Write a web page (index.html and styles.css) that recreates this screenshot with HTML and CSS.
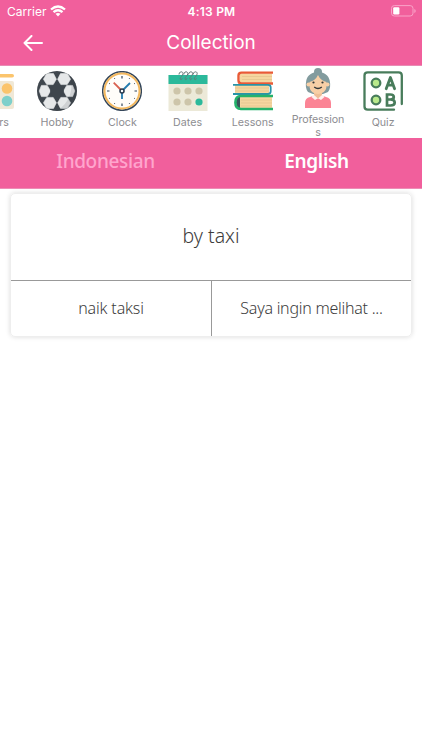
FILE: index.html
```html
<!DOCTYPE html>
<html lang="en">
<head>
<meta charset="utf-8">
<title>Collection</title>
<link rel="stylesheet" href="styles.css">
</head>
<body>
<header class="top">
  <div class="status">
    <div class="carrier"><span>Carrier</span>
      <svg width="16" height="12" viewBox="0 0 16 12" fill="none" stroke="#fff" stroke-width="2.3"><path d="M1 4.5Q8-1.6 15 4.5M3.5 7.2Q8 3.2 12.5 7.2"/><path d="M5.5 8.8Q8 7 10.5 8.8L8 11.4Z" fill="#fff" stroke="none"/></svg>
    </div>
    <span class="time">4:13 PM</span>
    <svg class="battery" width="25" height="12" viewBox="0 0 25 12"><rect x=".5" y=".6" width="21.5" height="10.4" rx="2.8" fill="none" stroke="#f9a3c8"/><rect x="2.2" y="2.2" width="6.2" height="7.2" rx="1.2" fill="#fff"/><path d="M23.3 4v4q1.4-.7 1.4-2t-1.4-2" fill="#f9a3c8"/></svg>
  </div>
  <div class="nav">
    <svg class="back" width="20" height="16" viewBox="0 0 20 16" fill="none" stroke="#fff" stroke-width="2" stroke-linecap="round" stroke-linejoin="round"><path d="M19 8H1.5M8.5 1L1.5 8l7 7"/></svg>
    <h1>Collection</h1>
  </div>
</header>

<nav class="strip">
  <div class="item first">
    <svg viewBox="0 0 40 40"><rect x="1" y="3" width="39" height="3.6" rx="1.8" fill="#fbc46c"/><rect x="1" y="10" width="39" height="28" rx="2" fill="#f0e8d6"/><circle cx="33" cy="17.5" r="5.3" fill="#fbc46c"/><circle cx="33" cy="30" r="5.3" fill="#7fd0cb"/></svg>
    <span>Colors</span>
  </div>
  <div class="item">
    <svg viewBox="0 0 40 40">
      <defs><clipPath id="ball"><circle cx="20" cy="20" r="20"/></clipPath></defs>
      <g clip-path="url(#ball)"><rect width="40" height="40" fill="#3f464d"/>
      <g fill="#e6e8e9" stroke="#e6e8e9" stroke-width=".6" stroke-linejoin="round">
        <path d="M9.7 2.6h6.8l2.9 5.6-3.2 5.4H9.8L6.4 8.2Z"/>
        <path d="M30.3 2.6h-6.8l-2.9 5.6 3.2 5.4h6.4l3.4-5.4Z"/>
        <path d="M4.4 14.4h5.9l3.2 5.6-3.2 5.6H4.4L2.2 20Z"/>
        <path d="M35.6 14.4h-5.9L26.5 20l3.2 5.6h5.9L37.8 20Z"/>
        <path d="M9.7 37.4h6.8l2.9-5.6-3.2-5.4H9.8l-3.4 5.4Z"/>
        <path d="M30.3 37.4h-6.8l-2.9-5.6 3.2-5.4h6.4l3.4 5.4Z"/>
      </g>
      <path d="M16.5 14h7l3.6 6-3.6 6h-7l-3.6-6Z" fill="#3f464d"/>
      <path d="M33 4Q39 27 20 40H40V4Z" fill="#26303a" opacity=".12"/></g>
    </svg>
    <span>Hobby</span>
  </div>
  <div class="item">
    <svg viewBox="0 0 40 40"><circle cx="20" cy="20" r="19.3" fill="#fff" stroke="#34465a" stroke-width="1.5"/><circle cx="20" cy="20" r="17.5" fill="#fffdf9" stroke="#f3b85e" stroke-width="2"/><path d="M20 5v2.5M20 32.5V35M5 20h2.5M32.5 20H35" stroke="#34465a" stroke-width="1.2"/><path d="M12.4 7.2l.5.8M7.2 12.4l.8.5M27.1 32l.5.8M32 27.1l.8.5M27.6 7.2l-.5.8M32.8 12.4l-.8.5M12.9 32l-.5.8M8 27.1l-.8.5" stroke="#34465a" stroke-width="1"/><path d="m20 20-8.3-8.3" stroke="#d9614f" stroke-width="1.8"/><path d="m20 20 8-8M20 20v8" stroke="#267cae" stroke-width="1.8"/><circle cx="20" cy="20" r="2" fill="#fff" stroke="#29394b" stroke-width="1.5"/></svg>
    <span>Clock</span>
  </div>
  <div class="item">
    <svg viewBox="0 0 40 40"><path d="M.5 4h39v36H.5z" fill="#ece9d8"/><path d="M.5 4h39v9H.5z" fill="#2bb99b"/><g fill="#cdc5aa"><circle cx="9" cy="20" r="3.6"/><circle cx="20" cy="20" r="3.6"/><circle cx="31" cy="20" r="3.6"/><circle cx="9" cy="31" r="3.6"/><circle cx="20" cy="31" r="3.6"/></g><circle cx="31" cy="31" r="3.6" fill="#2bb99b"/><g fill="none" stroke="#687779" stroke-width="1"><path id="ring" d="M11 3.5C11 .2 15 0 15 2.5S12 6 12.2 7.7s2 .8 2-.5"/><use href="#ring" x="4.8"/><use href="#ring" x="9.6"/><use href="#ring" x="14.2"/></g></svg>
    <span>Dates</span>
  </div>
  <div class="item">
    <svg viewBox="0 0 40 40"><path d="M7 2.5h32v9H7z" fill="#f5d6a0"/><path d="M9 5.5h30M9 8.5h30" stroke="#e3c28d" stroke-width=".7"/><path d="M40 1.6H8.5Q5.5 1.6 5.5 4.5v5q0 3 3 3H40" fill="none" stroke="#e95b36" stroke-width="2.4"/><path d="M2 14h34v9H2z" fill="#f5d6a0"/><path d="M2 17h34M2 20h34" stroke="#e3c28d" stroke-width=".7"/><path d="M0 13.8h35q2.7 0 2.7 2.5v4q0 2.7-2.7 2.7H0" fill="none" stroke="#2994a8" stroke-width="1.8"/><path d="M7 26h32v11H7z" fill="#f5d6a0"/><path d="M8 29h31M8 32h31M8 35h31" stroke="#e3c28d" stroke-width=".7"/><path d="M7 25Q3 26 3 31.3T7 38Z" fill="#3b555a"/><path d="M40 25H8Q2.4 25 2.4 31.5T8 38h32" fill="none" stroke="#25b26b" stroke-width="2.6"/></svg>
    <span>Lessons</span>
  </div>
  <div class="item two-line">
    <svg viewBox="0 0 40 40"><circle cx="20" cy="4" r="4" fill="#829b9e"/><path d="M10 24Q6.8 20 8.2 13C10 1 30 1 31.8 13q1.4 7-1.8 11l-5 2H15Z" fill="#829b9e"/><path d="M16 21h8v7l-4 4-4-4Z" fill="#eebe96"/><path d="M11.5 14Q17.5 12.5 20 7q2.5 5.5 8.5 7v4c0 10.5-17 10.5-17 0Z" fill="#f8cfa6"/><circle cx="10.5" cy="16.5" r="2" fill="#f8cfa6"/><circle cx="29.5" cy="16.5" r="2" fill="#f8cfa6"/><circle cx="15.5" cy="14.5" r="1.1" fill="#34383a"/><circle cx="24.5" cy="14.5" r="1.1" fill="#34383a"/><path d="M16.2 19Q20 22 23.8 19" fill="none" stroke="#34383a" stroke-width="1.4"/><path d="M7 40v-5q0-5 5-6l4-1.5 4 3.5 4-3.5 4 1.5q5 1 5 6v5Z" fill="#fb8495"/><path d="m15.5 26.5 4.5 4 4.5-4 2 2.5-3.5 3-3-1.7-3 1.7-3.5-3Z" fill="#fff0ee"/></svg>
    <span>Professions</span>
  </div>
  <div class="item">
    <svg viewBox="0 0 40 40"><g fill="none" stroke="#487c5b" stroke-width="2.3" stroke-linecap="round"><path d="M38.8 33V4.5q0-3.2-3.2-3.2H4.7Q1.5 1.3 1.5 4.5v31q0 3.2 3.2 3.2H31"/><g fill="#b9e98b"><circle cx="13" cy="12" r="4.3"/><circle cx="13" cy="29" r="4.3"/></g><path d="M23.2 17.8 27.4 6.5 31.6 17.8M24.8 14.2h5.2" stroke-width="2.8" stroke-linejoin="round"/><path d="M24 23.5V34.5h3.5q4.2 0 4.2-3t-4.2-3H24h3.2q3.6 0 3.6-2.5t-3.6-2.5Z" stroke-width="2.7"/></g></svg>
    <span>Quiz</span>
  </div>
</nav>

<div class="tabs">
  <button class="tab muted">Indonesian</button>
  <button class="tab">English</button>
</div>

<main>
  <section class="card">
    <div class="word">by taxi</div>
    <div class="answers">
      <div class="answer">naik taksi</div>
      <div class="answer long">Saya ingin melihat ...</div>
    </div>
  </section>
</main>
</body>
</html>
```

FILE: styles.css
```css
* { box-sizing: border-box; }
body { margin: 0; height: 750px; background: #fff; overflow: hidden; font-family: "Noto Sans", sans-serif; }
svg { display: block; }

.top { height: 66px; background: #f15f9c; color: #fff; font-family: Inter, sans-serif; border-bottom: 1px solid #e88bb4; }
.status { display: grid; grid-template-columns: 1fr auto 1fr; align-items: center; height: 22px; padding: 0 6px 0 7px; font-size: 12px; }
.carrier { display: flex; align-items: center; gap: 4px; letter-spacing: .02px; }
.time { font-weight: 600; letter-spacing: .2px; }
.battery { justify-self: end; margin-top: -1px; }
.nav { display: grid; grid-template-columns: 60px 1fr 60px; align-items: center; height: 42px; }
.back { margin-left: 23px; }
h1 { margin: 0; text-align: center; font-size: 19px; font-weight: 400; line-height: 24px; letter-spacing: -.05px; }

.strip { display: flex; height: 72px; margin-left: -40.6px; width: 464px; }
.item { flex: 0 0 65.2px; display: flex; flex-direction: column; align-items: center; padding: 5px 5px 0; }
.item svg { width: 40px; height: 40px; flex: none; }
.item span { width: 100%; margin-top: 5px; text-align: center; font: 10.7px/13px Inter, sans-serif; letter-spacing: 0; color: #8d8d91; overflow-wrap: anywhere; }
.item.two-line { padding-top: 2px; }
.item.two-line span { width: 55px; letter-spacing: -.1px; }
.item.first { padding-left: 7px; padding-right: 3px; }
.item.first span { padding-right: 3px; }

.tabs { display: grid; grid-template-columns: 1fr 1fr; height: 51px; background: #f15f9c; border-bottom: 1px solid #ee8db6; }
.tab { border: 0; background: none; padding: 0 0 4px; color: #fff; font: 600 19px/24px "Noto Sans", sans-serif; letter-spacing: -.35px; }
.tab.muted { color: #ffa5cd; font-weight: 500; }

main { padding: 4px 10px; }
.card { height: 144px; display: flex; flex-direction: column; border: 1px solid #eee; border-radius: 5px; box-shadow: 0 0 5px rgba(0,0,0,.14); color: #3c3c3c; font-weight: 330; }
.word { height: 86px; padding-bottom: 3px; display: flex; align-items: center; justify-content: center; font-size: 19.5px; }
.answers { flex: 1; display: grid; grid-template-columns: 1fr 1fr; border-top: 1px solid #999; }
.answer { display: flex; align-items: center; justify-content: center; padding-bottom: 2px; font-size: 16px; letter-spacing: -.15px; white-space: nowrap; }
.answer.long { letter-spacing: -.25px; }
.answer + .answer { border-left: 1px solid #999; }
```
